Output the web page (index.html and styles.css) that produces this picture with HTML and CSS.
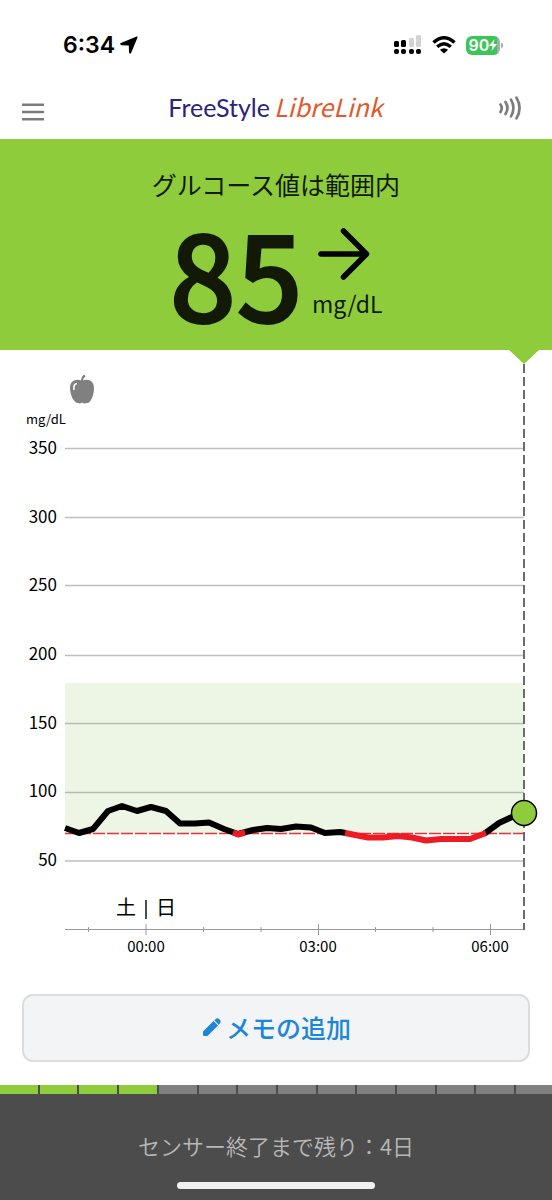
FILE: index.html
```html
<!DOCTYPE html>
<html lang="ja">
<head>
<meta charset="utf-8">
<meta name="viewport" content="width=device-width, initial-scale=1">
<title>FreeStyle LibreLink</title>
<link rel="stylesheet" href="styles.css">
</head>
<body>
<div class="app">
  <div class="status">
    <div class="status-left">
      <span class="clock">6:34</span>
      <svg class="location" viewBox="0 0 18 18" aria-hidden="true"><path d="M16.600.500Q18 0 17.500 1.500L11.200 16.800Q10 18.600 9 16.600L8.800 9.500 1.500 9.200Q-1 8.400.900 7Z"/></svg>
    </div>
    <div class="status-right">
      <svg class="signal" viewBox="0 0 28 20" aria-hidden="true">
        <g fill="#d2d2d2"><rect x="15" y="3" width="5" height="9" rx="1.5"/><rect x="22" y="0" width="5" height="12" rx="1.5"/></g>
        <rect x="0" y="6" width="5" height="6" rx="1.5"/><rect x="7" y="5" width="5" height="7" rx="1.5"/>
        <rect x="0" y="14" width="5" height="5" rx="2"/><rect x="7" y="14" width="5" height="5" rx="2"/><rect x="15" y="14" width="5" height="5" rx="2"/><rect x="22" y="14" width="5" height="5" rx="2"/>
      </svg>
      <svg class="wifi" viewBox="0 0 24 18" aria-hidden="true"><g fill="none" stroke="#000" stroke-width="3.4"><path d="M1.500 6.500Q12-3 22.500 6.500"/><path d="M5.200 10.800Q12 4.600 18.800 10.800"/></g><path d="M12 17.500 7.900 13.800Q12 10.500 16.100 13.800Z"/></svg>
      <div class="battery">
        <span class="battery-body">90<svg class="bolt" viewBox="0 0 8 12" aria-hidden="true"><path d="M5.500 0 0 7H3.500L2.500 12 8 5H4.500Z"/></svg></span>
        <span class="battery-tip"></span>
      </div>
    </div>
  </div>

  <header class="nav">
    <button class="icon-button" type="button" aria-label="メニュー">
      <svg class="menu-icon" viewBox="0 0 22 18"><path d="M0 1.800H22M0 9H22M0 16.200H22" stroke="#7c7c7c" stroke-width="2.600"/></svg>
    </button>
    <h1 class="logo"><span class="logo-free">FreeStyle</span><span class="logo-libre">LibreLink</span></h1>
    <button class="icon-button" type="button" aria-label="スキャン">
      <svg class="scan-icon" viewBox="0 0 23 24"><g fill="none" stroke="#7c7c7c" stroke-width="2.700" stroke-linecap="round"><path d="M1.500 8.500Q4 12 1.500 16"/><path d="M6.500 6Q10.400 12 6.500 18"/><path d="M12 3.600Q16.800 12 12 20.400"/><path d="M17.500 1.600Q23.600 12 17.500 22.400"/></g></svg>
    </button>
  </header>

  <section class="banner">
    <h2 class="banner-title">グルコース値は範囲内</h2>
    <div class="reading">
      <span class="value">85</span>
      <div class="trend">
        <svg class="arrow" viewBox="0 0 52 52" aria-hidden="true"><path d="M3 26H48M25.500 3 48.500 26 25.500 49" fill="none" stroke="#000" stroke-width="5.500" stroke-linecap="round" stroke-linejoin="round"/></svg>
        <span class="unit">mg/dL</span>
      </div>
    </div>
  </section>

  <main class="content">
    <svg class="chart" viewBox="0 0 552 644" role="img" aria-label="グルコースグラフ">
      <rect class="range" x="65" y="333" width="459" height="150"/>
      <path class="grid" d="M65 98.500H524M65 167.500H524M65 235.500H524M65 305.500H524M65 373.500H524M65 442.500H524M65 511H524"/>
      <path class="low-limit" d="M65 483.500H524"/>
      <path class="axis" d="M65 579.500H524M88.500 577V582M203.500 577V582M261 577V582M375.500 577V582M433 577V582M146 574V585M318.500 574V585M490.500 574V585"/>
      <path class="now" d="M524 14V580"/>
      <path class="pointer" d="M509 0H539L524 14Z"/>
      <g class="apple"><path d="M82 30.500C75 28 70 31 70 38C70 45 74 53 78 53Q80 54 82 52.500Q84 54 87 53C91 53 94 45 94 38C94 31 89 28 82 30.500Z"/><path d="M82 31Q82 27 85 25.500" fill="none" stroke="#808080" stroke-width="2"/><path d="M77 33.500Q73 34 74 40" fill="none" stroke="#fff" stroke-width="1.600"/></g>
      <g class="y-labels">
        <text x="57" y="104">350</text><text x="57" y="173">300</text><text x="57" y="241">250</text><text x="57" y="310">200</text><text x="57" y="379">150</text><text x="57" y="447">100</text><text x="57" y="516">50</text>
      </g>
      <text class="y-unit" x="26" y="74">mg/dL</text>
      <g class="trace">
        <path d="M65 478 79 483 93 479 108 461 122 456 137 461 151 457 166 461 180 473.500H195L209 472.500 224 479 238 484 253 480 267 478 281 479 296 476.500 311 477.500 325 483 340 482 346 483"/>
        <path d="M484 484 499 473 512 467 524 463"/>
        <path class="low" d="M233 482.500 238 484.500 245 482.500M345 483 368 487.500H383L398 486 412 487.500 426 490.500 441 489H470L486 483"/>
      </g>
      <circle class="current" cx="524" cy="463" r="12.500"/>
      <g class="days"><text x="126" y="565">土</text><path d="M146 550V569"/><text x="166" y="565">日</text></g>
      <g class="x-labels"><text x="146" y="602">00:00</text><text x="318" y="602">03:00</text><text x="490" y="602">06:00</text></g>
    </svg>
    <button class="note-button" type="button">
      <svg class="pencil" viewBox="0 0 18 18" aria-hidden="true"><path d="M0 13.500 10.500 3 15 7.500 4.500 18H1Q0 18 0 17ZM11.300 2.300 12.500 1.200Q14.500-.600 16.300 1.200L16.800 1.700Q18.600 3.500 16.800 5.500L15.700 6.700Z"/></svg>
      メモの追加
    </button>
  </main>

  <footer class="sensor">
    <div class="days-left" aria-hidden="true">
      <i class="day on"></i><i class="day on"></i><i class="day on"></i><i class="day on"></i><i class="day"></i><i class="day"></i><i class="day"></i><i class="day"></i><i class="day"></i><i class="day"></i><i class="day"></i><i class="day"></i><i class="day"></i><i class="day"></i>
    </div>
    <p class="sensor-text">センサー終了まで残り：4日</p>
    <div class="home-bar"></div>
  </footer>
</div>
</body>
</html>
```
FILE: styles.css
```css
* { box-sizing: border-box; }
body {
  margin: 0;
  background: #fff;
  color: #111;
  font-family: "Noto Sans CJK JP", "Noto Sans", sans-serif;
}
svg { display: block; }
button { font: inherit; border: 0; background: none; cursor: pointer; }
.app { display: flex; flex-direction: column; min-height: 100vh; }

.status {
  display: flex;
  justify-content: space-between;
  align-items: center;
  height: 80px;
  padding: 10px 49px 0 63px;
}
.status-left, .status-right, .battery { display: flex; align-items: center; }
.status-left { gap: 5px; }
.status-right { gap: 10px; }
.clock { font: 600 23px/28px Inter, sans-serif; color: #000; }
.location { width: 18px; height: 18px; }
.signal { width: 28px; height: 20px; }
.wifi { width: 24px; height: 18px; }
.battery { gap: 1px; }
.battery-body {
  display: flex;
  align-items: center;
  justify-content: center;
  width: 34px;
  height: 19px;
  border-radius: 6px;
  background: linear-gradient(90deg, #3cc65a 90%, #aaa 90%);
  color: #fff;
  font: 600 16px/19px Inter, sans-serif;
}
.bolt { width: 8px; height: 12px; fill: #fff; }
.battery-tip { width: 2px; height: 5px; border-radius: 0 2px 2px 0; background: #aaa; }

.nav {
  display: flex;
  justify-content: space-between;
  align-items: center;
  height: 59px;
  padding: 0 30px 0 22px;
}
.icon-button { padding: 4px 0 0; }
.menu-icon { width: 22px; height: 18px; }
.scan-icon { width: 23px; height: 24px; margin-top: -8px; }
.logo {
  display: flex;
  align-items: baseline;
  gap: 4px;
  margin: 0;
  padding: 0 0 6px 8px;
  font-size: 25px;
  line-height: 36px;
  font-weight: 400;
}
.logo-free { color: #29247c; font-family: Lato, sans-serif; }
.logo-libre { color: #e2592b; font-style: italic; }

.banner {
  display: flex;
  flex-direction: column;
  align-items: center;
  padding: 28px 16px 22px;
  background: #8fcc3b;
  color: #121a07;
}
.banner-title { margin: 0; font-size: 25px; line-height: 35px; font-weight: 400; }
.reading { display: flex; align-items: flex-end; gap: 9px; padding-top: 13px; }
.value { font-size: 117px; line-height: 113px; font-weight: 500; -webkit-text-stroke: 2px #121a07; }
.trend { display: flex; flex-direction: column; }
.arrow { width: 52px; height: 52px; margin-left: 6px; }
.unit { font-size: 23px; line-height: 46px; padding-bottom: 2px; }

.content { display: flex; flex-direction: column; }
.chart { width: 100%; height: auto; }
.range { fill: #edf6e5; }
.grid { stroke: #808080; stroke-opacity: .5; stroke-width: 1.5; }
.low-limit { stroke: #e8303a; stroke-width: 1.5; stroke-dasharray: 12 2; }
.axis { stroke: #999; fill: none; }
.now { stroke: #6b6b6b; stroke-width: 2; stroke-dasharray: 9 4; }
.pointer { fill: #8fcc3b; }
.apple { fill: #808080; }
.y-labels { font-size: 17px; text-anchor: end; }
.y-unit { font-size: 13px; }
.trace { fill: none; stroke: #000; stroke-width: 6; stroke-linejoin: round; }
.trace .low { stroke: #eb1c24; }
.current { fill: #8fcc3b; stroke: #000; stroke-width: 1.5; }
.days { font-size: 20px; text-anchor: middle; }
.days path { stroke: #111; stroke-width: 1.5; }
.x-labels { font-size: 15px; text-anchor: middle; }

.note-button {
  display: flex;
  align-items: center;
  justify-content: center;
  gap: 5px;
  margin: 0 22px 23px;
  padding: 0 6px 3px 8px;
  height: 68px;
  border: 2px solid #dcdcdd;
  border-radius: 11px;
  background: #f2f4f6;
  color: #1c86d8;
  font-size: 25px;
  font-weight: 500;
}
.pencil { width: 18px; height: 18px; fill: #1c86d8; }

.sensor {
  display: flex;
  flex-direction: column;
  align-items: center;
  flex: 1;
  background: #4c4c4c;
}
.days-left { display: flex; gap: 2px; width: 100%; height: 9px; }
.day { flex: 20; background: #808080; }
.day.on { background: #8fcc3b; }
.day:last-child { flex: 19; }
.sensor-text { margin: 0; padding: 35px 0 21px; font-size: 22px; line-height: 32px; font-weight: 350; color: #b8b8b8; }
.home-bar { width: 198px; height: 7px; border-radius: 4px; background: #f1f1f1; }
```
